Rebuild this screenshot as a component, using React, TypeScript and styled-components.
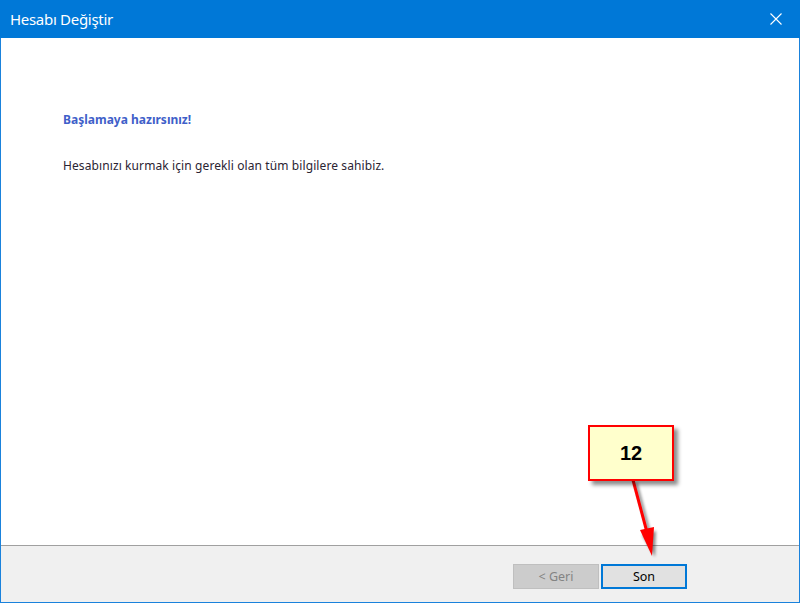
import styled, { createGlobalStyle } from "styled-components";

const GlobalStyle = createGlobalStyle`
  html, body {
    margin: 0;
    padding: 0;
    background: #ffffff;
  }
  body {
    font-family: "Noto Sans", "Open Sans", sans-serif;
  }
`;

const Window = styled.div`
  position: relative;
  width: 800px;
  height: 603px;
  box-sizing: border-box;
  border: 1px solid #1a82dc;
  border-top: none;
  display: flex;
  flex-direction: column;
  background: #ffffff;
`;

const TitleBar = styled.div`
  height: 38px;
  flex-shrink: 0;
  margin: 0 -1px;
  background: #0078d7;
  display: flex;
  align-items: center;
  justify-content: space-between;
  padding: 0 0 0 10px;
  color: #ffffff;
`;

const Title = styled.span`
  font-size: 15px;
  letter-spacing: -0.3px;
  padding-bottom: 1px;
`;

const CloseButton = styled.div`
  width: 46px;
  height: 38px;
  display: flex;
  align-items: center;
  justify-content: center;
  margin-right: 1px;
`;

const Content = styled.div`
  flex: 1;
  padding: 74px 0 0 62px;
`;

const Heading = styled.div`
  color: #3f5fc9;
  font-weight: 700;
  font-size: 12px;
  line-height: 16px;
`;

const Paragraph = styled.div`
  margin-top: 30px;
  color: #2b2433;
  font-size: 12px;
  line-height: 16px;
  letter-spacing: 0.1px;
`;

const Footer = styled.div`
  height: 57px;
  flex-shrink: 0;
  box-sizing: border-box;
  border-top: 1px solid #a0a0a0;
  background: #f0f0f0;
  display: flex;
  justify-content: flex-end;
  align-items: flex-start;
  padding: 18px 112px 0 0;
  gap: 2px;
`;

const Button = styled.button<{ $primary?: boolean }>`
  width: 86px;
  height: 25px;
  box-sizing: border-box;
  font-family: "Noto Sans", "Open Sans", sans-serif;
  font-size: 12.5px;
  padding: 0;
  background: ${(p) => (p.$primary ? "#e1e1e1" : "#cccccc")};
  border: ${(p) => (p.$primary ? "2px solid #0078d7" : "1px solid #bfbfbf")};
  color: ${(p) => (p.$primary ? "#000000" : "#838383")};
`;

const Callout = styled.div`
  position: absolute;
  left: 587px;
  top: 425px;
  width: 86px;
  height: 56px;
  box-sizing: border-box;
  border: 2px solid #ff0000;
  background: #ffffcc;
  display: flex;
  align-items: center;
  justify-content: center;
  font-family: "Liberation Sans", Arial, sans-serif;
  font-weight: 700;
  font-size: 20px;
  color: #000000;
  box-shadow: 4px 4px 4px rgba(0, 0, 0, 0.45);
`;

const Arrow = styled.svg`
  position: absolute;
  left: 600px;
  top: 470px;
  overflow: visible;
`;

export default function App() {
  return (
    <>
      <GlobalStyle />
      <Window>
        <TitleBar>
          <Title>Hesabı Değiştir</Title>
          <CloseButton>
            <svg width="12" height="12" viewBox="0 0 12 12">
              <path d="M0.5 0.5 L11.5 11.5 M11.5 0.5 L0.5 11.5" stroke="#ffffff" strokeWidth="1.1" />
            </svg>
          </CloseButton>
        </TitleBar>
        <Content>
          <Heading>Başlamaya hazırsınız!</Heading>
          <Paragraph>Hesabınızı kurmak için gerekli olan tüm bilgilere sahibiz.</Paragraph>
        </Content>
        <Footer>
          <Button disabled>&lt; Geri</Button>
          <Button $primary>Son</Button>
        </Footer>
        <Arrow width="80" height="100" viewBox="0 0 80 100">
          <defs>
            <filter id="sh" x="-50%" y="-50%" width="200%" height="200%">
              <feGaussianBlur stdDeviation="1.5" />
            </filter>
          </defs>
          <g opacity="0.45" filter="url(#sh)" transform="translate(3,3)">
            <path d="M32 10 L47 66" stroke="#000" strokeWidth="3" />
            <path d="M38 62 L51 84 L52 58 Z" fill="#000" />
          </g>
          <path d="M32 10 L47 66" stroke="#ff0000" strokeWidth="3" />
          <path d="M39 60 L51 86 L53 57 Z" fill="#ff0000" />
        </Arrow>
        <Callout>12</Callout>
      </Window>
    </>
  );
}
